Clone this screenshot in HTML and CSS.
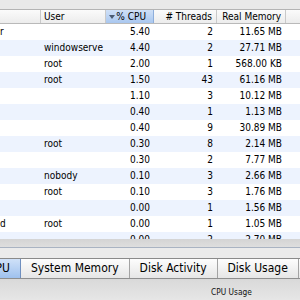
FILE: index.html
```html
<!DOCTYPE html>
<html>
<head>
<meta charset="utf-8">
<link rel="stylesheet" href="styles.css">
</head>
<body>
<div class="window">
  <div class="toolbar"></div>
  <div class="table">
    <div class="thead">
      <div class="th"></div>
      <div class="th th-left">User</div>
      <div class="th th-sorted"><span class="arrow"></span><span>% CPU</span></div>
      <div class="th">#&nbsp;Threads</div>
      <div class="th">Real Memory</div>
      <div class="th th-last"></div>
    </div>
    <div class="tbody">
      <div class="row"><div class="c name">r</div><div class="c user"></div><div class="c num">5.40</div><div class="c num">2</div><div class="c num">11.65 MB</div><div class="c"></div></div>
      <div class="row"><div class="c name"></div><div class="c user">windowserve</div><div class="c num">4.40</div><div class="c num">2</div><div class="c num">27.71 MB</div><div class="c"></div></div>
      <div class="row"><div class="c name"></div><div class="c user">root</div><div class="c num">2.00</div><div class="c num">1</div><div class="c num">568.00 KB</div><div class="c"></div></div>
      <div class="row"><div class="c name"></div><div class="c user">root</div><div class="c num">1.50</div><div class="c num">43</div><div class="c num">61.16 MB</div><div class="c"></div></div>
      <div class="row"><div class="c name"></div><div class="c user"></div><div class="c num">1.10</div><div class="c num">3</div><div class="c num">10.12 MB</div><div class="c"></div></div>
      <div class="row"><div class="c name"></div><div class="c user"></div><div class="c num">0.40</div><div class="c num">1</div><div class="c num">1.13 MB</div><div class="c"></div></div>
      <div class="row"><div class="c name"></div><div class="c user"></div><div class="c num">0.40</div><div class="c num">9</div><div class="c num">30.89 MB</div><div class="c"></div></div>
      <div class="row"><div class="c name"></div><div class="c user">root</div><div class="c num">0.30</div><div class="c num">8</div><div class="c num">2.14 MB</div><div class="c"></div></div>
      <div class="row"><div class="c name"></div><div class="c user"></div><div class="c num">0.30</div><div class="c num">2</div><div class="c num">7.77 MB</div><div class="c"></div></div>
      <div class="row"><div class="c name"></div><div class="c user">nobody</div><div class="c num">0.10</div><div class="c num">3</div><div class="c num">2.66 MB</div><div class="c"></div></div>
      <div class="row"><div class="c name"></div><div class="c user">root</div><div class="c num">0.10</div><div class="c num">3</div><div class="c num">1.76 MB</div><div class="c"></div></div>
      <div class="row"><div class="c name"></div><div class="c user"></div><div class="c num">0.00</div><div class="c num">1</div><div class="c num">1.56 MB</div><div class="c"></div></div>
      <div class="row"><div class="c name">d</div><div class="c user">root</div><div class="c num">0.00</div><div class="c num">1</div><div class="c num">1.05 MB</div><div class="c"></div></div>
      <div class="row"><div class="c name"></div><div class="c user"></div><div class="c num">0.00</div><div class="c num">2</div><div class="c num">2.70 MB</div><div class="c"></div></div>
    </div>
  </div>
  <div class="band"></div>
  <div class="gap"></div>
  <div class="tabs">
    <div class="tab tab-selected">CPU</div>
    <div class="tab">System Memory</div>
    <div class="tab">Disk Activity</div>
    <div class="tab">Disk Usage</div>
    <div class="tab">Network</div>
  </div>
  <div class="panel">
    <div class="panel-title">CPU Usage</div>
  </div>
</div>
</body>
</html>
```
FILE: styles.css
```css
html, body {
  margin: 0;
  padding: 0;
}
body {
  width: 300px;
  height: 300px;
  overflow: hidden;
  background: #e4e4e4;
  font-family: "DejaVu Sans Condensed", "DejaVu Sans", sans-serif;
  font-stretch: condensed;
  color: #000;
}
.window {
  width: 300px;
  height: 300px;
  display: flex;
  flex-direction: column;
  overflow: hidden;
}
.toolbar {
  height: 9px;
  background: #e9e9e9;
  border-bottom: 1px solid #b4b4b4;
  flex: none;
}
.table {
  flex: none;
  background: #fff;
}
.thead {
  display: grid;
  grid-template-columns: 41px 65px 48px 63px 69px 14px;
  height: 13px;
  border-bottom: 1px solid #b9b9b9;
  background: linear-gradient(#fbfbfb, #ececec);
}
.th {
  box-sizing: border-box;
  height: 13px;
  line-height: 13px;
  font-size: 10px;
  text-align: right;
  padding: 0 4px 0 3px;
  border-right: 1px solid #c9c9c9;
  white-space: nowrap;
  overflow: hidden;
}
.th-left {
  text-align: left;
}
.th-last {
  border-right: none;
}
.th-sorted {
  display: flex;
  justify-content: space-between;
  align-items: center;
  padding-right: 7px;
  background: linear-gradient(#cfe0f7, #a9c7ef);
  border-right: 1px solid #8eaedb;
}
.arrow {
  width: 0;
  height: 0;
  margin-left: 0;
  border-left: 3px solid transparent;
  border-right: 3px solid transparent;
  border-top: 4px solid #4a5a72;
}
.tbody {
  height: 215px;
  overflow: hidden;
}
.row {
  display: grid;
  grid-template-columns: 41px 65px 48px 63px 69px 14px;
  height: 16px;
  line-height: 16px;
  font-size: 10px;
}
.row:nth-child(even) {
  background: #edf3fe;
}
.c {
  white-space: nowrap;
  overflow: hidden;
}
.name {
  padding-left: 0;
}
.user {
  padding-left: 3px;
}
.num {
  text-align: right;
  padding-right: 4px;
}
.band {
  flex: none;
  height: 8px;
  background: linear-gradient(#d4d4d4, #dedede);
  border-bottom: 1px solid #a9b3c2;
}
.gap {
  flex: none;
  height: 10px;
  background: #ebebeb;
}
.tabs {
  flex: none;
  display: flex;
  height: 19px;
  border-top: 1px solid #8a8a8a;
  border-bottom: 1px solid #8f8f8f;
  background: linear-gradient(#fdfdfd, #e7e7e7);
  margin-left: -22px;
}
.tab {
  flex: none;
  padding: 0 10px;
  line-height: 19px;
  font-size: 12px;
  white-space: nowrap;
  border-right: 1px solid #a3a3a3;
  background: linear-gradient(#fdfdfd, #e6e6e6);
}
.tab-selected {
  background: linear-gradient(#cfe1f8, #9fc1ee);
  border-right: 1px solid #6f8fbf;
}
.panel {
  flex: 1;
  background: linear-gradient(#d9d9d9, #e6e6e6);
  padding-top: 8px;
}
.panel-title {
  padding-left: 211px;
  font-size: 8.3px;
  line-height: 10px;
  color: #111;
}
```
